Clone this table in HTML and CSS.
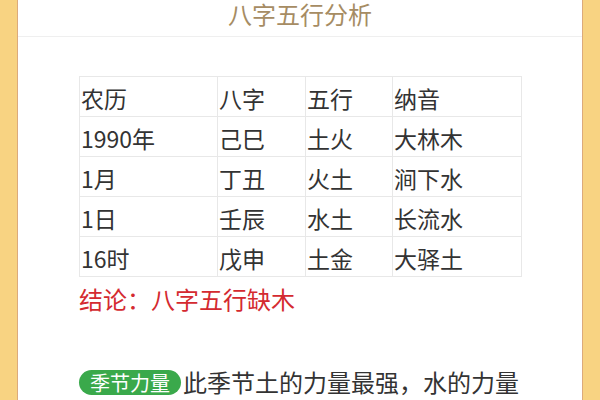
FILE: index.html
```html
<!DOCTYPE html>
<html lang="zh">
<head>
<meta charset="utf-8">
<link rel="stylesheet" href="styles.css">
</head>
<body>
<div class="panel">
  <div class="title">八字五行分析</div>
  <div class="content">
    <table class="bazi">
      <colgroup>
        <col class="c1"><col class="c2"><col class="c3"><col class="c4">
      </colgroup>
      <tr><td>农历</td><td>八字</td><td>五行</td><td>纳音</td></tr>
      <tr><td>1990年</td><td>己巳</td><td>土火</td><td>大林木</td></tr>
      <tr><td>1月</td><td>丁丑</td><td>火土</td><td>涧下水</td></tr>
      <tr><td>1日</td><td>壬辰</td><td>水土</td><td>长流水</td></tr>
      <tr><td>16时</td><td>戊申</td><td>土金</td><td>大驿土</td></tr>
    </table>
    <p class="conclusion">结论：八字五行缺木</p>
    <p class="season"><span class="badge">季节力量</span>此季节土的力量最强，水的力量</p>
  </div>
</div>
</body>
</html>
```

FILE: styles.css
```css
html, body {
  margin: 0;
  padding: 0;
  background: #f8d382;
  font-family: "Noto Sans CJK SC", "Noto Sans", sans-serif;
}
.panel {
  margin: 0 17px;
  height: 400px;
  background: #fff;
  border-left: 1px solid #dcaa7c;
  border-right: 1px solid #dcaa7c;
  overflow: hidden;
}
.title {
  height: 37px;
  box-sizing: border-box;
  border-bottom: 1px solid #efefef;
  text-align: center;
  font-size: 24px;
  line-height: 28px;
  color: #a68c63;
}
.content {
  padding: 39px 0 0 61px;
}
.bazi {
  border-collapse: collapse;
  width: 442px;
  table-layout: fixed;
  color: #333;
  font-size: 23px;
}
.c1 { width: 138px; }
.c2 { width: 88px; }
.c3 { width: 87px; }
.c4 { width: 129px; }
.bazi td {
  border: 1px solid #e8e8e8;
  height: 40px;
  padding: 3px 1px 0;
  box-sizing: border-box;
  line-height: 34px;
  white-space: nowrap;
}
.conclusion {
  margin: 6px 0 0;
  color: #d42a30;
  font-size: 24px;
  line-height: 32px;
}
.season {
  margin: 52px 0 0;
  font-size: 24px;
  line-height: 30px;
  color: #333;
  display: flex;
  align-items: center;
}
.badge {
  display: inline-block;
  background: #3aa94b;
  color: #fff;
  font-size: 20px;
  line-height: 25px;
  padding: 0 11px;
  border-radius: 13px;
  margin-right: 2px;
}
```
